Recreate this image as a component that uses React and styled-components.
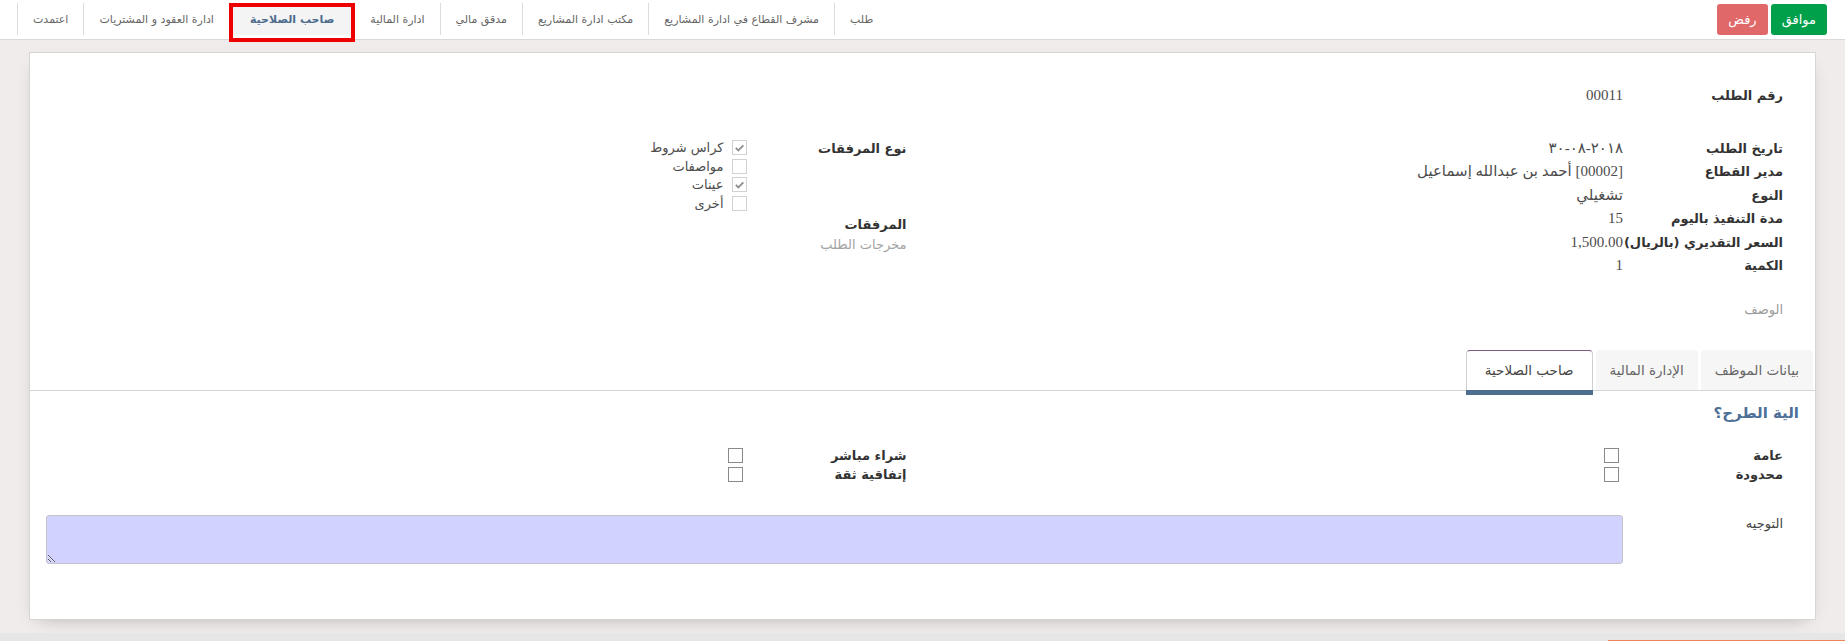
import React from "react";
import styled, { createGlobalStyle } from "styled-components";

const GlobalStyle = createGlobalStyle`
	*, *::before, *::after {
		box-sizing: border-box;
	}

	html,
	body {
		margin: 0;
		padding: 0;
	}

	body {
		background: #efeceb;
		font-family: "DejaVu Sans", sans-serif;
		color: #333;
	}
`;

const Page = styled.div`
	direction: rtl;
	width: 1845px;
	height: 641px;
	display: flex;
	flex-direction: column;
	overflow: hidden;
`;

const Header = styled.header`
	height: 40px;
	flex: none;
	background: #fff;
	border-bottom: 1px solid #d9d9d9;
	display: flex;
	justify-content: space-between;
	align-items: flex-start;
	padding: 3px 18px 0 17px;
`;

const Buttons = styled.div`
	display: flex;
	gap: 3px;
	margin-top: 1px;
`;

const ActionButton = styled.button`
	height: 31px;
	padding: 0 11px;
	border: none;
	border-radius: 3px;
	background: ${(p) => (p.$variant === "danger" ? "#e06868" : "#00a04a")};
	color: #fff;
	font-family: "DejaVu Sans", sans-serif;
	font-size: 13px;
	cursor: pointer;
`;

const StatusBar = styled.nav`
	display: flex;
	height: 32px;
`;

const StatusItem = styled.div`
	position: relative;
	display: flex;
	align-items: center;
	padding: 0 ${(p) => (p.$active ? 20 : 15)}px;
	border-left: 1px solid #dcdcdc;
	font-size: 11px;
	color: ${(p) => (p.$active ? "#4c6c8c" : "#666")};
	font-weight: ${(p) => (p.$active ? 700 : 400)};
	background: ${(p) => (p.$active ? "#f4f4f4" : "transparent")};
	white-space: nowrap;

	${(p) =>
		p.$marked &&
		`
		&::after {
			content: "";
			position: absolute;
			top: 0;
			bottom: -7px;
			left: -1px;
			right: -1px;
			border: 4px solid #ee0000;
		}
	`}
`;

const Main = styled.main`
	flex: 1;
	padding: 12px 29px 13px;
`;

const Sheet = styled.section`
	min-height: 567px;
	background: #fff;
	border: 1px solid #d8d5d5;
	box-shadow: 0 6px 18px -10px rgba(0, 0, 0, 0.35);
	padding: 31px 16px 55px;
`;

const Group = styled.div`
	padding-right: 16px;
`;

const Columns = styled.div`
	display: grid;
	grid-template-columns: 1fr 1fr;
	align-items: start;
	margin-top: ${(p) => p.$top || 0}px;
`;

const Row = styled.div`
	display: grid;
	grid-template-columns: 160px 1fr;
	min-height: ${(p) => p.$h || 23.5}px;
	align-items: ${(p) => (p.$center ? "center" : "start")};
	margin-top: ${(p) => p.$top || 0}px;
`;

const Label = styled.div`
	font-size: 13px;
	font-weight: ${(p) => (p.$light ? 400 : 700)};
	line-height: ${(p) => p.$lh || 23.5}px;
	color: ${(p) => (p.$light ? "#444" : "#333")};
	white-space: nowrap;
`;

const MutedLabel = styled.div`
	font-size: 13px;
	line-height: 23.5px;
	color: #9a9a9a;
	margin-top: ${(p) => p.$top || 0}px;
`;

const Value = styled.div`
	font-family: "Liberation Serif", "DejaVu Sans", serif;
	font-size: 15px;
	line-height: 23.5px;
	color: #4c4c4c;
	white-space: nowrap;
`;

const CheckList = styled.div`
	display: flex;
	flex-direction: column;
	padding-top: 2px;
`;

const CheckItem = styled.label`
	display: flex;
	align-items: center;
	gap: 8px;
	height: 18.5px;
	font-size: 13px;
	color: #4c4c4c;
`;

const Box = styled.span`
	width: 15px;
	height: 15px;
	flex: none;
	display: inline-flex;
	align-items: center;
	justify-content: center;
	background: #fff;
	border: 1px solid ${(p) => (p.$strong ? "#8a8a8a" : "#d2d2d2")};
	margin-right: ${(p) => (p.$strong ? 4 : 0)}px;
`;

const Stack = styled.div`
	margin-top: 2.5px;
`;

const StackLine = styled.div`
	font-size: 13px;
	line-height: 20px;
	font-weight: ${(p) => (p.$bold ? 700 : 400)};
	color: ${(p) => (p.$bold ? "#333" : "#a3a3a3")};
`;

const Notebook = styled.div`
	margin: 28.5px -16px 0;
`;

const TabNav = styled.div`
	display: flex;
	gap: 3px;
	height: 41px;
	padding-right: 2px;
	border-bottom: 1px solid #d6d6d6;
`;

const Tab = styled.div`
	position: relative;
	height: 40px;
	display: flex;
	align-items: center;
	padding: 0 ${(p) => (p.$active ? 18 : 13)}px;
	font-size: 13.5px;
	border-radius: 4px 4px 0 0;
	color: ${(p) => (p.$active ? "#444" : "#666")};
	background: ${(p) => (p.$active ? "#fff" : "#f6f6f6")};
	border: 1px solid ${(p) => (p.$active ? "#cfcfcf" : "transparent")};
	border-top-color: ${(p) => (p.$active ? "#7d5c80" : "transparent")};
	border-bottom: none;

	${(p) =>
		p.$active &&
		`
		&::after {
			content: "";
			position: absolute;
			left: -1px;
			right: -1px;
			bottom: -5px;
			height: 5px;
			background: #4f6d8f;
		}
	`}
`;

const TabPage = styled.div`
	padding: 10px 16px 0;
`;

const SectionTitle = styled.h3`
	margin: 0 0 21px;
	font-size: 15px;
	line-height: 24px;
	font-weight: 700;
	color: #4e7097;
`;

const Memo = styled.textarea`
	display: block;
	width: 100%;
	height: 49px;
	background: #d2d2ff;
	border: 1px solid #c4c4c8;
	border-radius: 3px;
	resize: vertical;
	font-family: "DejaVu Sans", sans-serif;
	font-size: 13px;
	outline: none;
`;

const FooterStrip = styled.div`
	height: 9px;
	flex: none;
	background: #e6e6e6;
	display: flex;
	align-items: flex-end;
`;

const ProgressBar = styled.div`
	width: 237px;
	height: 2px;
	background: #ef855f;
`;

const Check = ({ checked, strong }) => (
	<Box $strong={strong}>
		{checked && (
			<svg width="11" height="11" viewBox="0 0 12 12">
				<path
					d="M2 6.4l2.7 2.7L10.2 3.6"
					fill="none"
					stroke="#8f8f8f"
					strokeWidth="2"
				/>
			</svg>
		)}
	</Box>
);

const states = [
	"طلب",
	"مشرف القطاع في ادارة المشاريع",
	"مكتب ادارة المشاريع",
	"مدقق مالي",
	"ادارة المالية",
	"صاحب الصلاحية",
	"ادارة العقود و المشتريات",
	"اعتمدت",
];

const details = [
	["تاريخ الطلب", "٢٠١٨-٠٨-٣٠"],
	["مدير القطاع", "[00002] أحمد بن عبدالله إسماعيل"],
	["النوع", "تشغيلي"],
	["مدة التنفيذ باليوم", "15"],
	["السعر التقديري (بالريال)", "1,500.00"],
	["الكمية", "1"],
];

const attachments = [
	["كراس شروط", true],
	["مواصفات", false],
	["عينات", true],
	["أخرى", false],
];

const App = () => {
	return (
		<>
			<GlobalStyle />
			<Page>
				<Header>
					<Buttons>
						<ActionButton>موافق</ActionButton>
						<ActionButton $variant="danger">رفض</ActionButton>
					</Buttons>

					<StatusBar>
						{states.map((s) => (
							<StatusItem
								key={s}
								$active={s === "صاحب الصلاحية"}
								$marked={s === "صاحب الصلاحية"}
							>
								{s}
							</StatusItem>
						))}
					</StatusBar>
				</Header>

				<Main>
					<Sheet>
						<Group>
							<Row>
								<Label>رقم الطلب</Label>
								<Value>00011</Value>
							</Row>
						</Group>

						<Columns $top={29}>
							<Group>
								{details.map(([label, value]) => (
									<Row key={label}>
										<Label>{label}</Label>
										<Value>{value}</Value>
									</Row>
								))}
							</Group>

							<Group>
								<Row>
									<Label>نوع المرفقات</Label>
									<CheckList>
										{attachments.map(([name, on]) => (
											<CheckItem key={name}>
												<Check checked={on} />
												{name}
											</CheckItem>
										))}
									</CheckList>
								</Row>
								<Stack>
									<StackLine $bold>المرفقات</StackLine>
									<StackLine>مخرجات الطلب</StackLine>
								</Stack>
							</Group>
						</Columns>

						<Group>
							<MutedLabel $top={20}>الوصف</MutedLabel>
						</Group>

						<Notebook>
							<TabNav>
								<Tab>بيانات الموظف</Tab>
								<Tab>الإدارة المالية</Tab>
								<Tab $active>صاحب الصلاحية</Tab>
							</TabNav>

							<TabPage>
								<SectionTitle>الية الطرح؟</SectionTitle>

								<Columns>
									<Group>
										<Row $h={19} $center>
											<Label $lh={19}>عامة</Label>
											<Check strong />
										</Row>
										<Row $h={19} $center>
											<Label $lh={19}>محدودة</Label>
											<Check strong />
										</Row>
									</Group>
									<Group>
										<Row $h={19} $center>
											<Label $lh={19}>شراء مباشر</Label>
											<Check strong />
										</Row>
										<Row $h={19} $center>
											<Label $lh={19}>إتفاقية ثقة</Label>
											<Check strong />
										</Row>
									</Group>
								</Columns>

								<Group>
									<Row $top={31}>
										<Label $lh={17} $light>
											التوجيه
										</Label>
										<Memo />
									</Row>
								</Group>
							</TabPage>
						</Notebook>
					</Sheet>
				</Main>

				<FooterStrip>
					<ProgressBar />
				</FooterStrip>
			</Page>
		</>
	);
};

export default App;
